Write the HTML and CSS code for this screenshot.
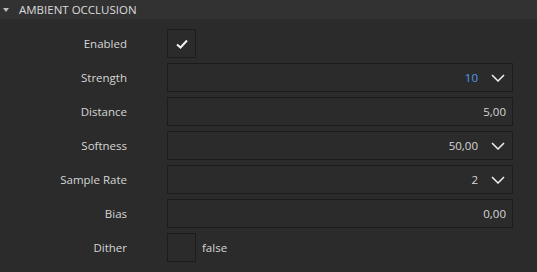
FILE: index.html
```html
<!DOCTYPE html>
<html lang="en">
<head>
  <meta charset="UTF-8">
  <meta name="viewport" content="width=device-width, initial-scale=1.0">
  <title>Ambient Occlusion</title>
  <link rel="stylesheet" href="styles.css">
</head>
<body>
  <div class="section-header">
    <span class="caret"></span>
    <span class="section-title">AMBIENT OCCLUSION</span>
  </div>
  <div class="props">
    <div class="prop-row">
      <label class="prop-label">Enabled</label>
      <div class="prop-value">
        <div class="check-box">
          <svg width="12" height="10" viewBox="0 0 12 10"><path d="M1 5.5 L4.5 8.5 L11 1.5" fill="none" stroke="#f2f2f2" stroke-width="2"/></svg>
        </div>
      </div>
    </div>
    <div class="prop-row">
      <label class="prop-label">Strength</label>
      <div class="prop-value">
        <div class="field dropdown"><span class="num blue">10</span><span class="chevron"><svg width="14" height="8" viewBox="0 0 14 8"><path d="M1 1 L7 7 L13 1" fill="none" stroke="#f0f0f0" stroke-width="1.5"/></svg></span></div>
      </div>
    </div>
    <div class="prop-row">
      <label class="prop-label">Distance</label>
      <div class="prop-value">
        <div class="field"><span class="num">5,00</span></div>
      </div>
    </div>
    <div class="prop-row">
      <label class="prop-label">Softness</label>
      <div class="prop-value">
        <div class="field dropdown"><span class="num">50,00</span><span class="chevron"><svg width="14" height="8" viewBox="0 0 14 8"><path d="M1 1 L7 7 L13 1" fill="none" stroke="#f0f0f0" stroke-width="1.5"/></svg></span></div>
      </div>
    </div>
    <div class="prop-row">
      <label class="prop-label">Sample Rate</label>
      <div class="prop-value">
        <div class="field dropdown"><span class="num">2</span><span class="chevron"><svg width="14" height="8" viewBox="0 0 14 8"><path d="M1 1 L7 7 L13 1" fill="none" stroke="#f0f0f0" stroke-width="1.5"/></svg></span></div>
      </div>
    </div>
    <div class="prop-row">
      <label class="prop-label">Bias</label>
      <div class="prop-value">
        <div class="field"><span class="num">0,00</span></div>
      </div>
    </div>
    <div class="prop-row">
      <label class="prop-label">Dither</label>
      <div class="prop-value">
        <div class="check-box"></div>
        <span class="bool-text">false</span>
      </div>
    </div>
  </div>
</body>
</html>
```

FILE: styles.css
```css
body {
  margin: 0;
  background-color: #2b2b2b;
  color: #d6d6d6;
  font-family: "Open Sans", "Noto Sans", Arial, sans-serif;
  font-size: 11.5px;
}
.section-header {
  display: flex;
  align-items: center;
  height: 19px;
  background-color: #323232;
}
.caret {
  width: 0;
  height: 0;
  margin-left: 3px;
  border-left: 3.5px solid transparent;
  border-right: 3.5px solid transparent;
  border-top: 4px solid #bdbdbd;
}
.section-title {
  margin-left: 10px;
  color: #dcdcdc;
}
.props {
  display: flex;
  flex-direction: column;
  gap: 5px;
  padding-top: 10px;
}
.prop-row {
  display: grid;
  grid-template-columns: 127px 1fr;
  column-gap: 40px;
  height: 29px;
}
.prop-label {
  align-self: center;
  text-align: right;
}
.prop-value {
  display: flex;
  align-items: center;
  width: 346px;
}
.check-box {
  width: 27px;
  height: 27px;
  border: 1px solid #1c1c1c;
  display: flex;
  align-items: center;
  justify-content: center;
}
.field {
  flex: 1;
  height: 27px;
  border: 1px solid #1c1c1c;
  display: flex;
  align-items: center;
  justify-content: flex-end;
  padding-right: 6px;
}
.field.dropdown {
  padding-right: 7px;
}
.num.blue {
  color: #4f9be8;
}
.chevron {
  display: flex;
  margin-left: 13px;
}
.bool-text {
  margin-left: 6px;
}
```
